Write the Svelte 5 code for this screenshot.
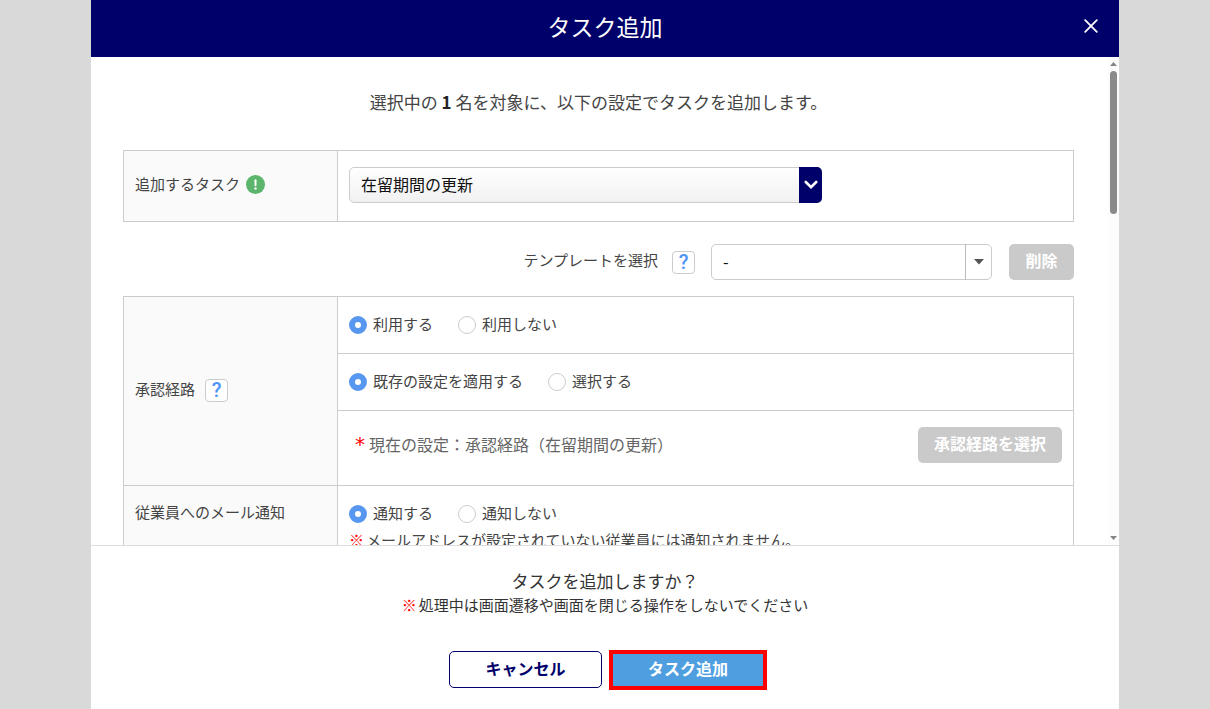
<script>
  let task = '在留期間の更新';
  let template = '-';
  let useRoute = 'yes';
  let routeType = 'existing';
  let notify = 'yes';

  const selectedCount = 1;

  const useOptions = [
    { value: 'yes', label: '利用する' },
    { value: 'no', label: '利用しない' }
  ];
  const routeOptions = [
    { value: 'existing', label: '既存の設定を適用する' },
    { value: 'select', label: '選択する' }
  ];
  const notifyOptions = [
    { value: 'yes', label: '通知する' },
    { value: 'no', label: '通知しない' }
  ];
</script>

<div class="overlay">
  <div class="modal" role="dialog" aria-modal="true" aria-labelledby="modal-title">
    <header class="modal-header">
      <h1 id="modal-title">タスク追加</h1>
      <button class="close" type="button" aria-label="閉じる">
        <svg width="14" height="14" viewBox="0 0 14 14">
          <path d="M1.2 1.2 L12.8 12.8 M12.8 1.2 L1.2 12.8" stroke="#fff" stroke-width="1.8" stroke-linecap="round" />
        </svg>
      </button>
    </header>

    <div class="modal-body">
      <div class="content">
        <p class="intro">選択中の <b>{selectedCount}</b> 名を対象に、以下の設定でタスクを追加します。</p>

        <table>
          <tbody>
            <tr>
              <th scope="row">
                <div class="label">
                  <label for="task">追加するタスク</label>
                  <svg class="required" width="19" height="19" viewBox="0 0 19 19" aria-hidden="true">
                    <circle cx="9.5" cy="9.5" r="9.5" fill="#5cb56c" />
                    <path d="M9.5 5.3 V10.2" stroke="#fff" stroke-width="2" stroke-linecap="round" />
                    <circle cx="9.5" cy="13.5" r="1.2" fill="#fff" />
                  </svg>
                </div>
              </th>
              <td>
                <div class="select task-select">
                  <select id="task" bind:value={task}>
                    <option>在留期間の更新</option>
                  </select>
                  <span class="arrow">
                    <svg width="14" height="10" viewBox="0 0 14 10">
                      <path d="M1.8 2 L7 7.2 L12.2 2" fill="none" stroke="#fff" stroke-width="2.6" stroke-linecap="round" />
                    </svg>
                  </span>
                </div>
              </td>
            </tr>
          </tbody>
        </table>

        <div class="template-row">
          <label for="template">テンプレートを選択</label>
          <button class="help" type="button">?</button>
          <div class="select template-select">
            <select id="template" bind:value={template}>
              <option>-</option>
            </select>
            <span class="arrow">
              <svg width="10" height="6" viewBox="0 0 10 6">
                <path d="M0 0 H10 L5 5.5 Z" fill="#555" />
              </svg>
            </span>
          </div>
          <button class="btn-gray" type="button" disabled>削除</button>
        </div>

        <table>
          <tbody>
            <tr>
              <th scope="row" rowspan="3">
                <div class="label route-label">
                  <span>承認経路</span>
                  <button class="help" type="button">?</button>
                </div>
              </th>
              <td>
                <div class="radios">
                  {#each useOptions as option}
                    <label>
                      <input type="radio" name="use-route" value={option.value} bind:group={useRoute} />
                      <span>{option.label}</span>
                    </label>
                  {/each}
                </div>
              </td>
            </tr>
            <tr>
              <td>
                <div class="radios">
                  {#each routeOptions as option}
                    <label>
                      <input type="radio" name="route-type" value={option.value} bind:group={routeType} />
                      <span>{option.label}</span>
                    </label>
                  {/each}
                </div>
              </td>
            </tr>
            <tr>
              <td>
                <div class="current-route">
                  <span><em>*</em>現在の設定：承認経路（在留期間の更新）</span>
                  <button class="btn-gray" type="button" disabled>承認経路を選択</button>
                </div>
              </td>
            </tr>
            <tr class="notify-row">
              <th scope="row">従業員へのメール通知</th>
              <td>
                <div class="radios">
                  {#each notifyOptions as option}
                    <label>
                      <input type="radio" name="notify" value={option.value} bind:group={notify} />
                      <span>{option.label}</span>
                    </label>
                  {/each}
                </div>
                <p class="note"><b>※</b>メールアドレスが設定されていない従業員には通知されません。</p>
              </td>
            </tr>
          </tbody>
        </table>
      </div>

      <div class="scrollbar" aria-hidden="true">
        <svg width="7" height="4" viewBox="0 0 7 4"><path d="M0 4 L3.5 0 L7 4 Z" fill="#858585" /></svg>
        <div class="track"><div class="thumb"></div></div>
        <svg width="7" height="4" viewBox="0 0 7 4"><path d="M0 0 L3.5 4 L7 0 Z" fill="#858585" /></svg>
      </div>
    </div>

    <footer class="modal-footer">
      <p class="confirm">タスクを追加しますか？</p>
      <p class="caution"><b>※</b>処理中は画面遷移や画面を閉じる操作をしないでください</p>
      <div class="actions">
        <button class="cancel" type="button">キャンセル</button>
        <button class="submit" type="button">タスク追加</button>
      </div>
    </footer>
  </div>
</div>

<style>
  :global(body) {
    margin: 0;
    background: #d9d9d9;
  }

  .overlay {
    height: 100vh;
    padding: 0 91px;
    font-family: 'Noto Sans CJK JP', sans-serif;
    font-size: 15px;
    line-height: 24px;
    color: #444;
  }

  .overlay * {
    box-sizing: border-box;
  }

  button,
  select {
    font-family: inherit;
    font-size: 16px;
  }

  button {
    padding: 0;
    border: 0;
    cursor: pointer;
  }

  p {
    margin: 0;
  }

  .modal {
    display: flex;
    flex-direction: column;
    height: 100%;
    background: #fff;
  }

  .modal-header {
    display: grid;
    grid-template-columns: 1fr auto 1fr;
    align-items: center;
    padding: 9px 21px 14px;
    background: #00006a;
    color: #fff;
  }

  .modal-header h1 {
    grid-column: 2;
    margin: 0;
    font-size: 23px;
    font-weight: 400;
    line-height: 34px;
  }

  .close {
    display: flex;
    justify-self: end;
    background: none;
  }

  .modal-body {
    display: flex;
    flex: 1;
    min-height: 0;
    overflow: hidden;
  }

  .content {
    flex: 1;
    padding: 32px 34px 0 32px;
  }

  .intro {
    margin-bottom: 35px;
    font-size: 17px;
    line-height: 26px;
    text-align: center;
  }

  .intro b {
    color: #222;
  }

  table {
    width: 100%;
    border-collapse: collapse;
    table-layout: fixed;
  }

  th,
  td {
    padding: 16px 11px;
    border: 1px solid #ccc;
    text-align: left;
  }

  th {
    width: 214px;
    padding: 14px 11px 18px;
    background: #fafafa;
    font-weight: 400;
  }

  .label {
    display: flex;
    align-items: center;
    gap: 6px;
  }

  .route-label {
    gap: 10px;
  }

  .help {
    width: 23px;
    height: 23px;
    border: 1px solid #ccc;
    border-radius: 4px;
    background: #fff;
    color: #4d94f5;
    font-family: Roboto, sans-serif;
    font-size: 20px;
    font-weight: 500;
    line-height: 21px;
  }

  .route-label .help {
    margin-top: 2px;
  }

  .select {
    display: grid;
  }

  .select select {
    grid-area: 1 / 1;
    width: 100%;
    height: 36px;
    padding: 0 11px 2px;
    border: 1px solid #ccc;
    border-radius: 5px;
    appearance: none;
    background: #fff;
    color: #111;
  }

  .select .arrow {
    display: flex;
    grid-area: 1 / 1;
    align-items: center;
    justify-content: center;
    justify-self: end;
    pointer-events: none;
  }

  .task-select {
    width: 473px;
    max-width: 100%;
    margin-bottom: 2px;
  }

  .task-select select {
    background: linear-gradient(#fff, #f1f1f1);
  }

  .task-select .arrow {
    width: 23px;
    border-radius: 0 5px 5px 0;
    background: #00006a;
  }

  .template-row {
    display: flex;
    align-items: center;
    justify-content: flex-end;
    margin: 22px 0 16px;
  }

  .template-row label {
    padding-bottom: 4px;
  }

  .template-row .help {
    margin: 0 16px 0 14px;
  }

  .template-select {
    width: 281px;
    margin-right: 17px;
  }

  .template-select .arrow {
    width: 27px;
    border-left: 1px solid #bbb;
  }

  .btn-gray {
    height: 36px;
    padding: 0 16px 4px;
    border-radius: 5px;
    background: #cacaca;
    color: #fff;
    font-weight: 700;
  }

  .template-row .btn-gray {
    width: 65px;
  }

  .radios {
    display: flex;
    gap: 25px;
  }

  .radios label {
    display: flex;
    align-items: center;
    gap: 6px;
    height: 24px;
  }

  .radios span {
    padding-bottom: 3px;
  }

  .radios input {
    width: 18px;
    height: 18px;
    margin: 0;
    border: 1px solid #ccc;
    border-radius: 50%;
    appearance: none;
    background: #fff;
  }

  .radios input:checked {
    border: 6px solid #5897f0;
  }

  .current-route {
    display: flex;
    align-items: center;
    justify-content: space-between;
    padding-bottom: 6px;
    color: #666;
    font-size: 16px;
  }

  .current-route span {
    padding-bottom: 2px;
  }

  .current-route em {
    padding: 0 4px 0 6px;
    color: #f00;
    font-family: 'DejaVu Sans', sans-serif;
    font-size: 20px;
    font-style: normal;
    line-height: 20px;
  }

  .notify-row th {
    vertical-align: top;
  }

  .note {
    margin-top: 2px;
  }

  .note b,
  .caution b {
    margin-right: 2px;
    color: #f00;
    font-weight: 900;
  }

  .scrollbar {
    display: flex;
    flex-direction: column;
    align-items: center;
    gap: 5px;
    width: 11px;
    padding: 5px 0;
    background: #fcfcfc;
  }

  .track {
    flex: 1;
  }

  .thumb {
    width: 7px;
    height: 31%;
    border-radius: 4px;
    background: #8a8a8a;
  }

  .modal-footer {
    padding: 22px 0 21px;
    border-top: 1px solid #ddd;
    color: #333;
    text-align: center;
  }

  .confirm {
    font-size: 17px;
    line-height: 26px;
  }

  .caution {
    line-height: 22px;
  }

  .actions {
    display: flex;
    align-items: center;
    justify-content: center;
    gap: 11px;
    margin-top: 35px;
    padding-left: 2px;
  }

  .actions button {
    padding-bottom: 4px;
    font-weight: 700;
  }

  .cancel {
    width: 153px;
    height: 37px;
    border: 1px solid #00006a;
    border-radius: 5px;
    background: #fff;
    color: #00006a;
  }

  .submit {
    width: 150px;
    height: 32px;
    outline: 4px solid #f00;
    background: #4f9fe0;
    color: #fff;
  }
</style>
